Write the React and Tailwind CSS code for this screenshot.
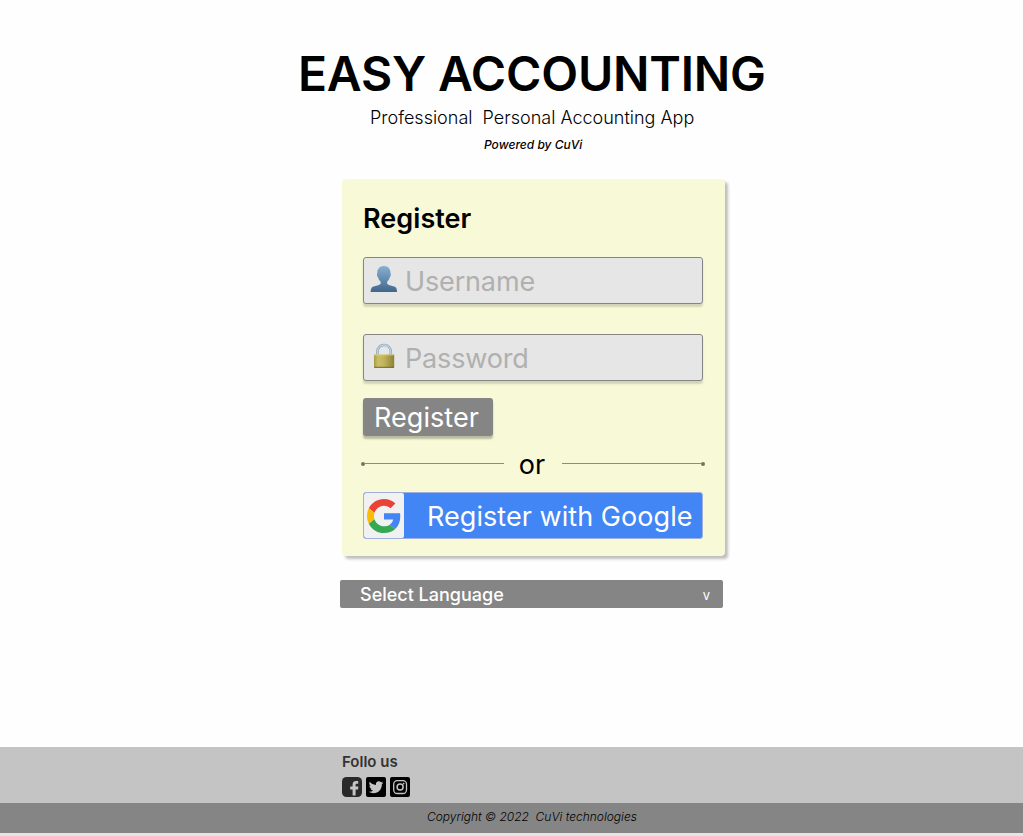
import React from "react";

function PersonIcon() {
  return (
    <svg viewBox="0 0 27 27" className="ml-[6px] mb-[3px] h-[27px] w-[27px] shrink-0">
      <defs>
        <linearGradient id="person" x1="0" y1="0" x2="0" y2="1">
          <stop offset="0" stopColor="#86afd0" />
          <stop offset="0.55" stopColor="#6089ae" />
          <stop offset="1" stopColor="#41648a" />
        </linearGradient>
      </defs>
      <path
        d="M13.9 0C9.7 0 7.3 2.9 7.3 6.7C7.3 7.7 6.7 8 7 9.2C7.3 10.5 7.9 10.7 8.3 11.9C8.8 13.5 9.8 14.7 10.7 15.7L10.6 17.8C8.9 19.8 3.2 19.9 1.7 21.8C0.9 22.9 0.7 24.5 0.6 26.1H27C26.9 24.5 26.9 22.9 26.1 21.8C24.6 19.9 18.9 19.8 17.2 17.8L17.1 15.7C18 14.7 19 13.5 19.5 11.9C19.9 10.7 20.5 10.5 20.8 9.2C21.1 8 20.5 7.7 20.5 6.7C20.5 2.9 18.1 0 13.9 0Z"
        fill="url(#person)"
      />
    </svg>
  );
}

function LockIcon() {
  return (
    <svg viewBox="0 0 27 27" className="ml-[6.5px] mr-[-0.5px] mb-[2px] h-[27px] w-[27px] shrink-0">
      <defs>
        <linearGradient id="lock" x1="0" y1="0" x2="1" y2="0">
          <stop offset="0" stopColor="#a89b45" />
          <stop offset="0.2" stopColor="#c9bf68" />
          <stop offset="0.5" stopColor="#bfb45a" />
          <stop offset="1" stopColor="#8f8035" />
        </linearGradient>
      </defs>
      <path d="M6.4 12.5V9.2C6.4 4.7 9.3 2 13 2S19.8 4.7 19.8 9.2V12.5" fill="none" stroke="#8ba3b8" strokeWidth="2.6" />
      <path d="M6.4 12.5V9.2C6.4 4.7 9.3 2 13 2S19.8 4.7 19.8 9.2V12.5" fill="none" stroke="#b9d4e8" strokeWidth="1.3" />
      <rect x="3" y="11.4" width="20.2" height="13.4" rx="0.8" fill="url(#lock)" />
      <path d="M3.4 11.9H22.8" stroke="#ded590" strokeWidth="0.8" />
      <path d="M3.2 24.3H23" stroke="#6b5b25" strokeWidth="0.9" />
    </svg>
  );
}

function GoogleLogo() {
  return (
    <svg viewBox="0 0 48 48" className="h-[34px] w-[34px]">
      <path fill="#EA4335" d="M24 9.5c3.54 0 6.71 1.22 9.21 3.6l6.85-6.85C35.9 2.38 30.47 0 24 0 14.62 0 6.51 5.38 2.56 13.22l7.98 6.19C12.43 13.72 17.74 9.5 24 9.5z" />
      <path fill="#4285F4" d="M46.98 24.55c0-1.57-.15-3.09-.38-4.55H24v9.02h12.94c-.58 2.96-2.26 5.48-4.78 7.18l7.73 6c4.51-4.18 7.09-10.36 7.09-17.65z" />
      <path fill="#FBBC05" d="M10.53 28.59c-.48-1.45-.76-2.99-.76-4.59s.27-3.14.76-4.59l-7.98-6.19C.92 16.46 0 20.12 0 24c0 3.88.92 7.54 2.56 10.78l7.97-6.19z" />
      <path fill="#34A853" d="M24 48c6.48 0 11.93-2.13 15.89-5.81l-7.73-6c-2.15 1.45-4.92 2.3-8.16 2.3-6.26 0-11.57-4.22-13.47-9.91l-7.98 6.19C6.51 42.62 14.62 48 24 48z" />
    </svg>
  );
}

function FacebookIcon() {
  return (
    <svg viewBox="0 0 20 20" className="h-5 w-5">
      <rect width="20" height="20" rx="4.5" fill="#292929" />
      <path d="M10.6 18.6V12.4H8.2V9.4H10.6V7.4C10.6 5.1 12 4 14.2 4H16.2V6.7H14.9C13.9 6.7 13.6 7.2 13.6 8V9.4H16.4L16 12.4H13.6V18.6Z" fill="#c4c4c4" />
    </svg>
  );
}

function TwitterIcon() {
  return (
    <svg viewBox="0 0 20 20" className="h-5 w-5">
      <rect width="20" height="20" rx="2" fill="#000" />
      <g transform="translate(2.7 2.9) scale(0.61)">
        <path d="M23.953 4.57a10 10 0 01-2.825.775 4.958 4.958 0 002.163-2.723c-.951.555-2.005.959-3.127 1.184a4.92 4.92 0 00-8.384 4.482C7.69 8.095 4.067 6.13 1.64 3.162a4.822 4.822 0 00-.666 2.475c0 1.71.87 3.213 2.188 4.096a4.904 4.904 0 01-2.228-.616v.06a4.923 4.923 0 003.946 4.827 4.996 4.996 0 01-2.212.085 4.936 4.936 0 004.604 3.417 9.867 9.867 0 01-6.102 2.105c-.39 0-.779-.023-1.17-.067a13.995 13.995 0 007.557 2.209c9.053 0 13.998-7.496 13.998-13.985 0-.21 0-.42-.015-.63A9.935 9.935 0 0024 4.59z" fill="#c4c4c4" />
      </g>
    </svg>
  );
}

function InstagramIcon() {
  return (
    <svg viewBox="0 0 20 20" className="h-5 w-5">
      <rect width="20" height="20" rx="2" fill="#000" />
      <rect x="3.7" y="3.7" width="12.8" height="12.8" rx="3.5" fill="none" stroke="#c4c4c4" strokeWidth="1.3" />
      <circle cx="10.1" cy="10.1" r="3" fill="none" stroke="#c4c4c4" strokeWidth="1.5" />
      <circle cx="13.6" cy="6.6" r="0.9" fill="#c4c4c4" />
    </svg>
  );
}

function Field({ icon, label, type }) {
  return (
    <label className="flex h-[47px] w-[340px] items-center rounded-[3px] border border-[#858585] bg-[#e6e6e6] shadow-[0_3px_2px_rgba(0,0,0,0.15)]">
      {icon}
      <input
        type={type}
        placeholder={label}
        className="ml-[8px] w-[280px] bg-transparent pt-[2px] text-[27px] leading-[34px] tracking-[-0.15px] outline-none placeholder:text-[#b0b0b0] placeholder:opacity-100"
      />
    </label>
  );
}

function Divider() {
  return (
    <div className="ml-[-2px] flex h-[33px] w-[344px] items-center">
      <span className="h-1 w-1 rounded-full bg-[#75755f]" />
      <span className="h-px w-[139px] bg-[#8e8e75]" />
      <span className="w-[56px] pt-[2px] text-center text-[27px] leading-[32px]">or</span>
      <span className="ml-[2px] h-px w-[139px] bg-[#8e8e75]" />
      <span className="h-1 w-1 rounded-full bg-[#75755f]" />
    </div>
  );
}

export default function App() {
  return (
    <div className="flex h-[836px] w-[1023px] flex-col overflow-hidden bg-[#fefefe] font-['Inter',sans-serif] whitespace-nowrap text-black">
      <header className="flex flex-col items-start pt-[45px]">
        <h1 className="ml-[298px] text-[48px] leading-[58px] font-semibold tracking-[-0.2px]">EASY ACCOUNTING</h1>
        <p className="mt-[4px] ml-[370px] text-[18px] leading-[22px] font-light whitespace-pre">{"Professional  Personal Accounting App"}</p>
        <p className="mt-[8px] ml-[484px] text-[12px] leading-[16px] font-medium italic">Powered by CuVi</p>
      </header>

      <main className="flex flex-1 flex-col items-start">
        <section className="mt-[26px] ml-[342px] h-[377px] w-[383px] rounded-[4px] bg-[#f8fad7] pt-[23px] pl-[21px] shadow-[3px_3px_3px_rgba(0,0,0,0.25)]">
          <h2 className="text-[27px] leading-[34px] font-semibold tracking-[0.05px]">Register</h2>
          <div className="mt-[21px] flex flex-col gap-[30px]">
            <Field icon={<PersonIcon />} label="Username" type="text" />
            <Field icon={<LockIcon />} label="Password" type="password" />
          </div>
          <button className="mt-[17px] flex h-[38px] w-[130px] items-center rounded-[3px] bg-[#858585] pt-[2px] pl-[11px] text-[27px] leading-[34px] tracking-[0.05px] text-white shadow-[0_3px_2px_rgba(0,0,0,0.25)]">
            Register
          </button>
          <div className="mt-[11px]">
            <Divider />
          </div>
          <button className="mt-[12px] flex h-[47px] w-[340px] items-center overflow-hidden rounded-[3px] border border-[#a1b1df] bg-[#4285f4]">
            <span className="flex h-[45px] w-[40px] items-center justify-center rounded-[2px] bg-[#f1f1f1]">
              <GoogleLogo />
            </span>
            <span className="ml-[23px] pt-[2px] text-[27px] leading-[34px] tracking-[0.05px] text-white">Register with Google</span>
          </button>
        </section>

        <button className="mt-[24px] ml-[340px] flex h-[28px] w-[383px] items-center justify-between rounded-[2px] bg-[#858585] pr-[13px] pl-[20px] text-white">
          <span className="pt-[2px] text-[18px] leading-[22px] font-medium">Select Language</span>
          <span className="pt-[3px] text-[13px] leading-[17px]">v</span>
        </button>
      </main>

      <footer className="h-[89px] shrink-0 bg-[#e5e5e5]">
        <div className="h-[56px] bg-[#c4c4c4] pt-[6px] pl-[342px]">
          <p className="text-[15px] leading-[18px] font-semibold text-[#333]">Follo us</p>
          <div className="mt-[6px] flex gap-[4px]">
            <FacebookIcon />
            <TwitterIcon />
            <InstagramIcon />
          </div>
        </div>
        <div className="h-[30px] bg-[#858585] pt-[6px] pl-[427px] text-[12px] leading-[16px] font-light whitespace-pre text-black italic">
          {"Copyright © 2022  CuVi technologies"}
        </div>
      </footer>
    </div>
  );
}
